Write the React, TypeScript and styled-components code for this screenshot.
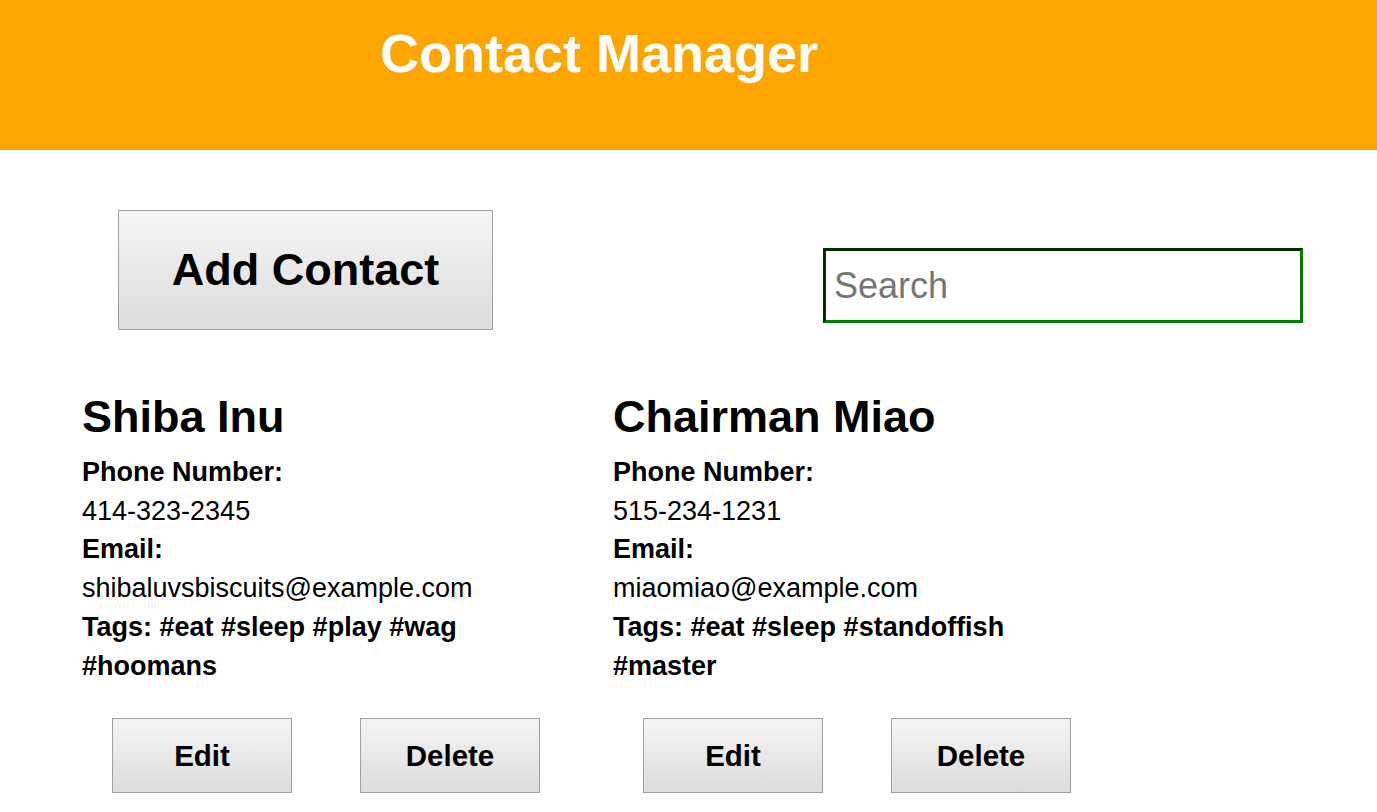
import React from "react";
import styled, { createGlobalStyle } from "styled-components";

const GlobalStyle = createGlobalStyle`
  html, body { margin: 0; padding: 0; background: #ffffff; }
  body { font-family: "Liberation Sans", Arial, sans-serif; color: #000; }
  * { box-sizing: border-box; }
`;

const Header = styled.header`
  height: 150px;
  background: #ffa500;
  padding: 22px 0 0 380px;
`;

const Title = styled.h1`
  margin: 0;
  font-size: 54px;
  font-weight: 700;
  color: #ffffff;
`;

const Toolbar = styled.div`
  display: flex;
  align-items: flex-start;
  padding: 60px 0 0 118px;
`;

const Button = styled.button<{ $size: "large" | "small" }>`
  flex-shrink: 0;
  font-family: "Liberation Sans", Arial, sans-serif;
  font-weight: 700;
  color: #000;
  border: 1px solid #a0a0a0;
  border-radius: 0;
  background: linear-gradient(#f5f5f5, #dcdcdc);
  padding: 0;
  cursor: pointer;
  width: ${(p) => (p.$size === "large" ? "375px" : "180px")};
  height: ${(p) => (p.$size === "large" ? "120px" : "75px")};
  font-size: ${(p) => (p.$size === "large" ? "45px" : "29.5px")};
`;

const Search = styled.input`
  flex-shrink: 0;
  margin: 38px 0 0 330px;
  width: 480px;
  height: 75px;
  border: 3px inset green;
  padding: 0 0 0 8px;
  font-family: "Liberation Sans", Arial, sans-serif;
  font-size: 36px;
  outline: none;
  &::placeholder { color: #757575; }
`;

const Grid = styled.div`
  display: grid;
  grid-template-columns: repeat(2, 450px);
  column-gap: 81px;
  padding: 61px 0 0 82px;
`;

const Card = styled.article`
  display: flex;
  flex-direction: column;
`;

const Name = styled.h2`
  margin: 0 0 10px;
  font-size: 45px;
  font-weight: 700;
  line-height: 51.7px;
`;

const Details = styled.div`
  font-size: 27px;
  line-height: 38.8px;
`;

const Label = styled.div`
  font-weight: 700;
`;

const Value = styled.div`
  font-weight: 400;
`;

const Actions = styled.div`
  display: flex;
  gap: 68px;
  padding: 33px 0 0 30px;
`;

const contacts = [
  {
    name: "Shiba Inu",
    phone: "414-323-2345",
    email: "shibaluvsbiscuits@example.com",
    tags: ["eat", "sleep", "play", "wag", "hoomans"],
  },
  {
    name: "Chairman Miao",
    phone: "515-234-1231",
    email: "miaomiao@example.com",
    tags: ["eat", "sleep", "standoffish", "master"],
  },
];

export default function App() {
  return (
    <>
      <GlobalStyle />
      <Header>
        <Title>Contact Manager</Title>
      </Header>
      <Toolbar>
        <Button $size="large">Add Contact</Button>
        <Search placeholder="Search" />
      </Toolbar>
      <Grid>
        {contacts.map((c) => (
          <Card key={c.name}>
            <Name>{c.name}</Name>
            <Details>
              <Label>Phone Number:</Label>
              <Value>{c.phone}</Value>
              <Label>Email:</Label>
              <Value>{c.email}</Value>
              <Label>Tags: {c.tags.map((t) => "#" + t).join(" ")}</Label>
            </Details>
            <Actions>
              <Button $size="small">Edit</Button>
              <Button $size="small">Delete</Button>
            </Actions>
          </Card>
        ))}
      </Grid>
    </>
  );
}
